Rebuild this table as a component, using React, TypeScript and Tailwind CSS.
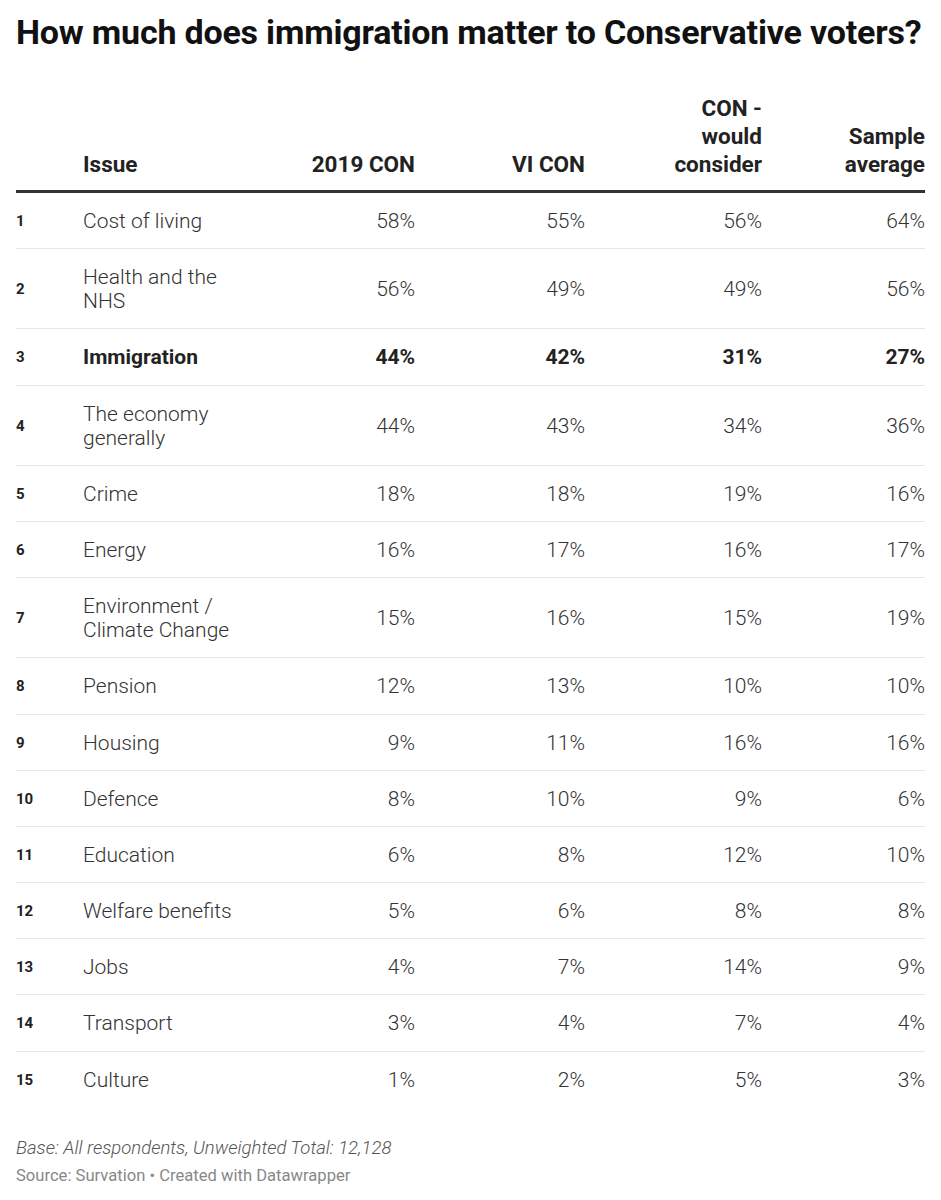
import React from "react";

type Row = { n: number; issue: string; v: [string, string, string, string]; bold?: boolean };

const rows: Row[] = [
  { n: 1, issue: "Cost of living", v: ["58%", "55%", "56%", "64%"] },
  { n: 2, issue: "Health and the NHS", v: ["56%", "49%", "49%", "56%"] },
  { n: 3, issue: "Immigration", v: ["44%", "42%", "31%", "27%"], bold: true },
  { n: 4, issue: "The economy generally", v: ["44%", "43%", "34%", "36%"] },
  { n: 5, issue: "Crime", v: ["18%", "18%", "19%", "16%"] },
  { n: 6, issue: "Energy", v: ["16%", "17%", "16%", "17%"] },
  { n: 7, issue: "Environment / Climate Change", v: ["15%", "16%", "15%", "19%"] },
  { n: 8, issue: "Pension", v: ["12%", "13%", "10%", "10%"] },
  { n: 9, issue: "Housing", v: ["9%", "11%", "16%", "16%"] },
  { n: 10, issue: "Defence", v: ["8%", "10%", "9%", "6%"] },
  { n: 11, issue: "Education", v: ["6%", "8%", "12%", "10%"] },
  { n: 12, issue: "Welfare benefits", v: ["5%", "6%", "8%", "8%"] },
  { n: 13, issue: "Jobs", v: ["4%", "7%", "14%", "9%"] },
  { n: 14, issue: "Transport", v: ["3%", "4%", "7%", "4%"] },
  { n: 15, issue: "Culture", v: ["1%", "2%", "5%", "3%"] },
];

const grid = "grid grid-cols-[67px_170px_162px_170px_177px_163px]";

export default function App() {
  return (
    <div className="w-[941px] h-[1200px] bg-white px-[16px] text-[#333]" style={{ fontFamily: "Roboto, 'Noto Sans', sans-serif" }}>
      <h1 className="pt-[12px] text-[34px] leading-[40px] font-bold text-[#111] tracking-[-0.2px] whitespace-nowrap">
        How much does immigration matter to Conservative voters?
      </h1>
      <div className={`${grid} mt-[42px] border-b-[3px] border-[#333] pb-[12px] items-end text-[22.5px] leading-[28px] font-bold text-[#222]`}>
        <div />
        <div>Issue</div>
        <div className="text-right">2019 CON</div>
        <div className="text-right">VI CON</div>
        <div className="flex justify-end"><div className="w-[98px] text-right">CON - would consider</div></div>
        <div className="flex justify-end"><div className="w-[94px] text-right">Sample average</div></div>
      </div>
      {rows.map((r, i) => (
        <div
          key={r.n}
          className={`${grid} items-center pt-[16px] pb-[15.2px] text-[21px] leading-[24px] ${r.bold ? "font-bold text-[#222]" : "font-light"} ${i < rows.length - 1 ? "border-b border-[#e6e6e6]" : ""}`}
        >
          <div className="text-[15px] font-bold text-[#222]">{r.n}</div>
          <div className="w-[165px]">{r.issue}</div>
          {r.v.map((x, j) => (
            <div key={j} className="text-right">{x}</div>
          ))}
        </div>
      ))}
      <div className="mt-[29px] text-[18.5px] leading-[24px] italic font-light text-[#555]">
        Base: All respondents, Unweighted Total: 12,128
      </div>
      <div className="mt-[5px] text-[16.6px] leading-[22px] text-[#888]">
        Source: Survation • Created with Datawrapper
      </div>
    </div>
  );
}
